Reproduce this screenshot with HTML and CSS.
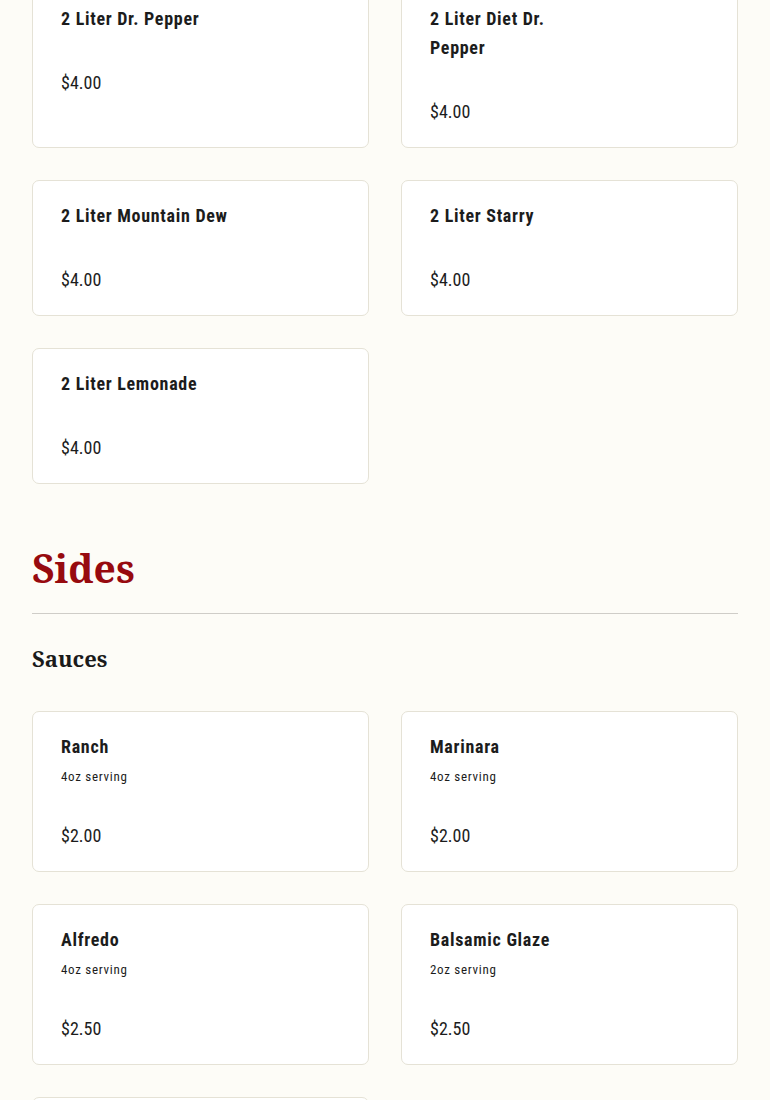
FILE: index.html
```html
<!DOCTYPE html>
<html lang="en">
<head>
<meta charset="utf-8">
<title>Menu</title>
<link rel="stylesheet" href="styles.css">
</head>
<body>
<main class="page">
  <section class="group">
    <div class="grid">
      <article class="card"><h4 class="item-name">2 Liter Dr. Pepper</h4><p class="price">$4.00</p></article>
      <article class="card"><h4 class="item-name">2 Liter Diet Dr. Pepper</h4><p class="price">$4.00</p></article>
      <article class="card"><h4 class="item-name">2 Liter Mountain Dew</h4><p class="price">$4.00</p></article>
      <article class="card"><h4 class="item-name">2 Liter Starry</h4><p class="price">$4.00</p></article>
      <article class="card"><h4 class="item-name">2 Liter Lemonade</h4><p class="price">$4.00</p></article>
    </div>
  </section>

  <section class="category">
    <h2 class="category-title">Sides</h2>
    <h3 class="sub-title">Sauces</h3>
    <div class="grid">
      <article class="card"><h4 class="item-name">Ranch</h4><p class="desc">4oz serving</p><p class="price">$2.00</p></article>
      <article class="card"><h4 class="item-name">Marinara</h4><p class="desc">4oz serving</p><p class="price">$2.00</p></article>
      <article class="card"><h4 class="item-name">Alfredo</h4><p class="desc">4oz serving</p><p class="price">$2.50</p></article>
      <article class="card"><h4 class="item-name">Balsamic Glaze</h4><p class="desc">2oz serving</p><p class="price">$2.50</p></article>
      <article class="card"><h4 class="item-name">Garlic Butter</h4><p class="desc">2oz serving</p><p class="price">$1.50</p></article>
    </div>
  </section>
</main>
</body>
</html>
```

FILE: styles.css
```css
html, body {
  margin: 0;
  padding: 0;
  background: #fdfcf7;
}

body {
  font-family: "Roboto Condensed", "Liberation Sans", Arial, sans-serif;
  color: #1c1c1c;
}

.page {
  padding: 0 32px;
  margin-top: -17px;
}

.grid {
  display: grid;
  grid-template-columns: 1fr 1fr;
  gap: 32px;
}

.card {
  background: #ffffff;
  border: 1px solid #e5e2d6;
  border-radius: 7px;
  padding: 20px 28px 21px;
  display: flex;
  flex-direction: column;
}

.item-name {
  margin: 0;
  font-size: 18px;
  line-height: 29px;
  font-weight: 700;
  letter-spacing: 0.7px;
  max-width: 60%;
}

.desc {
  margin: 6px 0 0;
  font-size: 13px;
  line-height: 20px;
  letter-spacing: 0.7px;
}

.price {
  margin: 35px 0 0;
  font-size: 18px;
  line-height: 29px;
  letter-spacing: 0;
}

.desc + .price {
  margin-top: 34px;
}

.category {
  margin-top: 61px;
}

.category-title {
  margin: 0;
  font-family: "Noto Serif", "DejaVu Serif", serif;
  font-size: 39px;
  line-height: 46px;
  font-weight: 700;
  color: #970a0f;
  padding-bottom: 22px;
  border-bottom: 1px solid #cfcdc8;
}

.sub-title {
  margin: 28px 0 37px;
  font-family: "Noto Serif", "DejaVu Serif", serif;
  font-size: 22px;
  line-height: 32px;
  font-weight: 700;
  color: #1a1a1a;
}
```
